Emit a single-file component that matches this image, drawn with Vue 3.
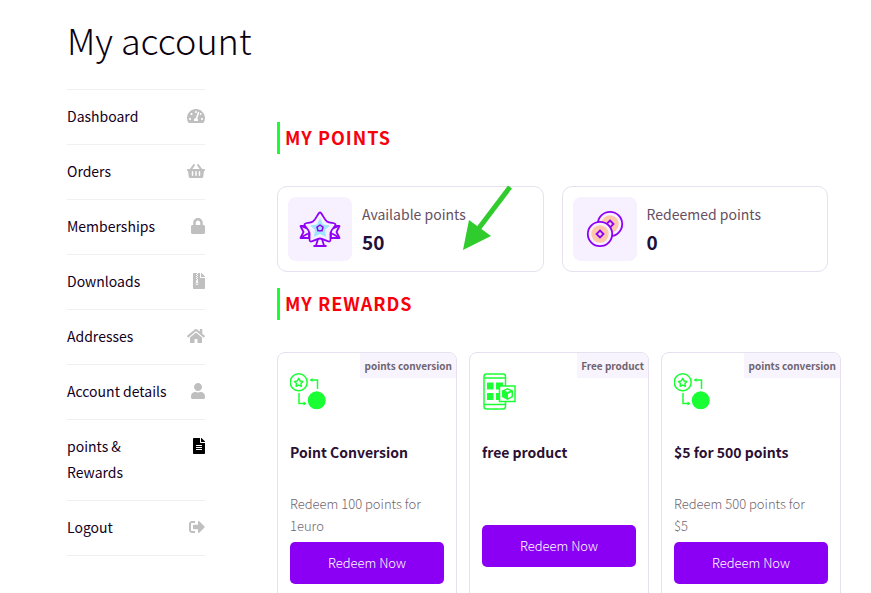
<script setup>
const navItems = [
  {
    label: 'Dashboard',
    box: '0 0 576 512',
    width: 18,
    path: 'M288 32C128.94 32 0 160.94 0 320c0 52.8 14.25 102.26 39.06 144.8 5.61 9.62 16.3 15.2 27.44 15.2h443c11.14 0 21.83-5.58 27.44-15.2C561.75 422.26 576 372.8 576 320c0-159.06-128.94-288-288-288zm0 64c14.71 0 26.58 10.13 30.32 23.65-1.11 2.26-2.64 4.23-3.45 6.67l-9.22 27.67c-5.13 3.49-10.97 6.01-17.64 6.01-17.67 0-32-14.33-32-32S270.33 96 288 96zM96 384c-17.67 0-32-14.33-32-32s14.33-32 32-32 32 14.33 32 32-14.33 32-32 32zm48-160c-17.67 0-32-14.33-32-32s14.33-32 32-32 32 14.33 32 32-14.33 32-32 32zm246.77-72.41l-61.33 184C343.13 347.33 352 364.54 352 384c0 11.72-3.38 22.55-8.88 32H232.88c-5.5-9.45-8.88-20.28-8.88-32 0-33.94 26.5-61.43 59.9-63.59l61.34-184.01c4.17-12.56 17.73-19.45 30.36-15.17 12.57 4.19 19.35 17.79 15.17 30.36zm14.66 57.2l15.52-46.55c3.47-1.29 7.13-2.23 11.05-2.23 17.67 0 32 14.33 32 32s-14.33 32-32 32c-11.38-.01-20.89-6.28-26.57-15.22zM480 384c-17.67 0-32-14.33-32-32s14.33-32 32-32 32 14.33 32 32-14.33 32-32 32z',
  },
  {
    label: 'Orders',
    box: '0 0 576 512',
    width: 18,
    path: 'M576 216v16c0 13.255-10.745 24-24 24h-8l-26.113 182.788C514.509 462.435 494.257 480 470.37 480H105.63c-23.887 0-44.139-17.565-47.518-41.212L32 256h-8c-13.255 0-24-10.745-24-24v-16c0-13.255 10.745-24 24-24h67.341l106.78-146.821c10.395-14.292 30.407-17.453 44.701-7.058 14.293 10.395 17.453 30.408 7.058 44.701L170.477 192h235.046L326.12 82.821c-10.395-14.292-7.234-34.306 7.059-44.701 14.291-10.395 34.306-7.235 44.701 7.058L484.659 192H552c13.255 0 24 10.745 24 24zM312 392V280c0-13.255-10.745-24-24-24s-24 10.745-24 24v112c0 13.255 10.745 24 24 24s24-10.745 24-24zm112 0V280c0-13.255-10.745-24-24-24s-24 10.745-24 24v112c0 13.255 10.745 24 24 24s24-10.745 24-24zm-224 0V280c0-13.255-10.745-24-24-24s-24 10.745-24 24v112c0 13.255 10.745 24 24 24s24-10.745 24-24z',
  },
  {
    label: 'Memberships',
    box: '0 0 448 512',
    width: 14,
    path: 'M400 224h-24v-72C376 68.2 307.8 0 224 0S72 68.2 72 152v72H48c-26.5 0-48 21.5-48 48v192c0 26.5 21.5 48 48 48h352c26.5 0 48-21.5 48-48V272c0-26.5-21.5-48-48-48zm-104 0H152v-72c0-39.7 32.3-72 72-72s72 32.3 72 72v72z',
  },
  {
    label: 'Downloads',
    box: '0 0 384 512',
    width: 12,
    path: 'M224 136V0H160v32h-32V0H24C10.7 0 0 10.7 0 24v464c0 13.3 10.7 24 24 24h336c13.3 0 24-10.7 24-24V160H248c-13.2 0-24-10.8-24-24zM96 32h32v32H96zM128 64h32v32h-32zM96 96h32v32H96zM128 128h32v32h-32zM96 160h32v32H96zM128 192h32v32h-32zM107 224h42l20 97c7 35-10 63-41 63s-48-28-41-63zM128 304c-18 0-30 10-30 25s12 25 30 25 30-10 30-25-12-25-30-25zM384 121.9v6.1H256V0h6.1c6.4 0 12.5 2.5 17 7l97.9 98c4.5 4.5 7 10.6 7 16.9z',
  },
  {
    label: 'Addresses',
    box: '0 0 576 512',
    width: 18,
    path: 'M280.37 148.26L96 300.11V464a16 16 0 0 0 16 16l112.06-.29a16 16 0 0 0 15.92-16V368a16 16 0 0 1 16-16h64a16 16 0 0 1 16 16v95.64a16 16 0 0 0 16 16.05L464 480a16 16 0 0 0 16-16V300L295.67 148.26a12.19 12.19 0 0 0-15.3 0zM571.6 251.47L488 182.56V44.05a12 12 0 0 0-12-12h-56a12 12 0 0 0-12 12v72.61L318.47 43a48 48 0 0 0-61 0L4.34 251.47a12 12 0 0 0-1.6 16.9l25.5 31A12 12 0 0 0 45.15 301l235.22-193.74a12.19 12.19 0 0 1 15.3 0L530.9 301a12 12 0 0 0 16.9-1.6l25.5-31a12 12 0 0 0-1.7-16.93z',
  },
  {
    label: 'Account details',
    box: '0 0 448 512',
    width: 14,
    path: 'M224 256c70.7 0 128-57.3 128-128S294.7 0 224 0 96 57.3 96 128s57.3 128 128 128zm89.6 32h-16.7c-22.2 10.2-46.9 16-72.9 16s-50.6-5.8-72.9-16h-16.7C60.2 288 0 348.2 0 422.4V464c0 26.5 21.5 48 48 48h352c26.5 0 48-21.5 48-48v-41.6c0-74.2-60.2-134.4-134.4-134.4z',
  },
  {
    label: 'points & Rewards',
    box: '0 0 384 512',
    width: 12,
    active: true,
    path: 'M224 136V0H24C10.7 0 0 10.7 0 24v464c0 13.3 10.7 24 24 24h336c13.3 0 24-10.7 24-24V160H248c-13.2 0-24-10.8-24-24zm64 236c0 6.6-5.4 12-12 12H108c-6.6 0-12-5.4-12-12v-8c0-6.6 5.4-12 12-12h168c6.6 0 12 5.4 12 12v8zm0-64c0 6.6-5.4 12-12 12H108c-6.6 0-12-5.4-12-12v-8c0-6.6 5.4-12 12-12h168c6.6 0 12 5.4 12 12v8zm0-72v8c0 6.6-5.4 12-12 12H108c-6.6 0-12-5.4-12-12v-8c0-6.6 5.4-12 12-12h168c6.6 0 12 5.4 12 12zm96-114.1v6.1H256V0h6.1c6.4 0 12.5 2.5 17 7l97.9 98c4.5 4.5 7 10.6 7 16.9z',
  },
  {
    label: 'Logout',
    box: '0 0 512 512',
    width: 16,
    path: 'M497 273L329 441c-15 15-41 4.5-41-17v-96H152c-13.3 0-24-10.7-24-24v-96c0-13.3 10.7-24 24-24h136V88c0-21.4 25.9-32 41-17l168 168c9.3 9.4 9.3 24.6 0 34zM192 436v-40c0-6.6-5.4-12-12-12H96c-17.7 0-32-14.3-32-32V160c0-17.7 14.3-32 32-32h84c6.6 0 12-5.4 12-12V76c0-6.6-5.4-12-12-12H96c-53 0-96 43-96 96v192c0 53 43 96 96 96h84c6.6 0 12-5.4 12-12z',
  },
]

const rewards = [
  { badge: 'points conversion', kind: 'conversion', title: 'Point Conversion', text: 'Redeem 100 points for 1euro' },
  { badge: 'Free product', kind: 'product', title: 'free product', text: '' },
  { badge: 'points conversion', kind: 'conversion', title: '$5 for 500 points', text: 'Redeem 500 points for $5' },
]
</script>

<template>
  <div class="page">
    <h1>My account</h1>
    <div class="layout">
      <nav class="menu">
        <ul>
          <li v-for="item in navItems" :key="item.label">
            <a href="#" :class="{ active: item.active }">
              <span>{{ item.label }}</span>
              <svg :viewBox="item.box" :width="item.width" height="16" aria-hidden="true">
                <path :d="item.path" fill-rule="evenodd" />
              </svg>
            </a>
          </li>
        </ul>
      </nav>

      <main>
        <h2>MY POINTS</h2>
        <div class="stats">
          <section class="stat">
            <div class="tile">
              <svg viewBox="0 0 64 64" width="64" height="64" fill="none" stroke="#8f00f5" stroke-width="1.8" stroke-linejoin="round" aria-hidden="true">
                <path d="M12.500 29H21V41H12.500L15.500 35ZM51.500 29H43V41H51.500L48.500 35Z" />
                <path d="M13 29L19 31.500M51 29L45 31.500M13 40.500L20 36.500M51 40.500L44 36.500" />
                <path d="M30 42L28 48.500M34 42L36 48.500M25.500 49H38.500" />
                <path d="M32 15.500C34 15.500 36 22.500 39 24.500S47.500 25.500 47.500 27.500 43 32.500 42.500 36 43.500 44 41.500 44.500 35 41.500 32 41.500 24.500 45 22.500 44.500 22 39.500 21.500 36 16.500 29.500 16.500 27.500 22 26.500 25 24.500 30 15.500 32 15.500Z" fill="#f7f1ff" />
                <path d="M32 21L35 27.500L42 28.500L37 33L38.200 40L32 37L25.800 40L27 33L22 28.500L29 27.500Z" fill="#a0e6ff" stroke="none" />
                <path d="M32 28L35 30.200L34 33.800H30L29 30.200Z" stroke-width="1.500" />
              </svg>
            </div>
            <div class="figures">
              <span class="label">Available points</span>
              <strong>50</strong>
            </div>
            <svg class="pointer" viewBox="0 0 54 68" width="54" height="68" aria-hidden="true">
              <path d="M50 4L19 45" stroke="#30cb2c" stroke-width="5" fill="none" />
              <path d="M3 67L9 37L31 53Z" fill="#30cb2c" />
            </svg>
          </section>
          <section class="stat">
            <div class="tile">
              <svg viewBox="0 0 64 64" width="64" height="64" stroke="#8f00f5" stroke-width="1.8" aria-hidden="true">
                <circle cx="37" cy="27" r="12.200" fill="#f7f1ff" />
                <circle cx="37" cy="27" r="8.700" fill="#ffc8aa" stroke="none" />
                <path d="M37 23.500L40.500 27L37 30.500L33.500 27Z" fill="#f7d8d8" />
                <circle cx="27" cy="37" r="12.200" fill="#f7f1ff" />
                <circle cx="27" cy="37" r="8.700" fill="#ffc8aa" stroke="none" />
                <path d="M27 33.500L30.500 37L27 40.500L23.500 37Z" fill="#f7d8d8" />
              </svg>
            </div>
            <div class="figures">
              <span class="label">Redeemed points</span>
              <strong>0</strong>
            </div>
          </section>
        </div>

        <h2>MY REWARDS</h2>
        <div class="rewards">
          <article v-for="reward in rewards" :key="reward.title" class="reward">
            <span class="badge">{{ reward.badge }}</span>
            <svg v-if="reward.kind === 'conversion'" viewBox="0 0 38 38" width="38" height="38" fill="none" stroke="#1aff33" stroke-width="1.500" aria-hidden="true">
              <circle cx="8.700" cy="10.300" r="8.500" />
              <path d="M8.700 6.300L10.100 8.900L12.900 9.400L10.900 11.500L11.300 14.300L8.700 13.100L6.100 14.300L6.500 11.500L4.500 9.400L7.300 8.900Z" stroke-linejoin="round" />
              <path d="M27.500 17V8H21M9 21V31.500H15" />
              <path d="M19.500 8L22.500 6V10ZM16.500 31.500L13.500 29.500V33.500Z" fill="#1aff33" stroke="none" />
              <circle cx="26.700" cy="28.300" r="9" fill="#1aff33" stroke="none" />
            </svg>
            <svg v-else viewBox="0 0 38 38" width="38" height="38" fill="none" stroke="#1aff33" stroke-width="1.500" aria-hidden="true">
              <rect x="2" y="2" width="21.500" height="35" rx="2.500" />
              <path d="M2 6H23.500M2 32.500H23.500" />
              <path d="M5 10.500H11.500V17.500H5ZM14 10.500H21V17.500H14ZM5 21H11.500V28H5ZM14 21H18V28H14Z" fill="#1aff33" stroke="none" />
              <rect x="17.500" y="14" width="15.500" height="15.500" fill="#fff" />
              <path d="M25.500 16L31 18.500V25L25.500 28L20 25V18.500Z" fill="#1aff33" stroke="none" />
              <path d="M26 22L29.500 20.200V24.200L26 26ZM23 18.700L25.500 17.600L28 18.700L25.500 20Z" fill="#fff" stroke="none" />
            </svg>
            <h3>{{ reward.title }}</h3>
            <p>{{ reward.text }}</p>
            <button type="button">Redeem Now</button>
          </article>
        </div>
      </main>
    </div>
  </div>
</template>

<style>
body {
  margin: 0;
  background: #fff;
}
</style>

<style scoped>
.page {
  padding: 12px 30px 24px 67px;
  font-family: "Noto Sans CJK SC", "Noto Sans", sans-serif;
  font-size: 14px;
  line-height: 26px;
  color: #2b1033;
}

h1 {
  margin: 0 0 23px;
  font-size: 36px;
  font-weight: 300;
  line-height: 54px;
  color: #0a000e;
}

.layout {
  display: grid;
  grid-template-columns: 138fr 564fr;
  gap: 72px;
  align-items: start;
}

.menu ul {
  margin: 0;
  padding: 0;
  list-style: none;
  border-top: 1px solid #f0f0f0;
}

.menu li {
  border-bottom: 1px solid #f0f0f0;
}

.menu a {
  display: flex;
  justify-content: space-between;
  gap: 24px;
  padding: 13px 0 15px;
  color: #14001c;
  text-decoration: none;
}

.menu svg {
  flex: none;
  margin-top: 5px;
  fill: #bfbfbf;
}

.menu a.active svg {
  fill: #000;
}

main {
  padding-top: 33px;
}

h2 {
  margin: 0 0 32px;
  padding: 0 0 2px 5px;
  border-left: 3px solid #1aff33;
  font-size: 18px;
  font-weight: 700;
  line-height: 30px;
  letter-spacing: 1px;
  color: #f8000c;
}

.stats {
  display: grid;
  grid-template-columns: 1fr 1fr;
  gap: 18px;
  margin: 0 13px 16px 0;
}

.stat {
  position: relative;
  display: flex;
  align-items: center;
  gap: 10px;
  padding: 10px;
  border: 1px solid #e6e0ef;
  border-radius: 10px;
}

.tile {
  flex: none;
  height: 64px;
  border-radius: 8px;
  background: #f7f1ff;
}

.figures {
  display: flex;
  flex-direction: column;
  padding-bottom: 2px;
}

.label {
  line-height: 28px;
  color: #655063;
}

.figures strong {
  font-size: 19px;
  line-height: 28px;
  color: #20103a;
}

.pointer {
  position: absolute;
  top: -4px;
  right: 29px;
}

.rewards {
  display: grid;
  grid-template-columns: repeat(3, 1fr);
  gap: 12px;
}

.reward {
  position: relative;
  display: flex;
  flex-direction: column;
  align-items: flex-start;
  padding: 19px 12px 24px;
  border: 1px solid #e6e0ef;
  border-radius: 8px;
}

.badge {
  position: absolute;
  top: 0;
  right: 0;
  padding: 0 4px;
  border-top-right-radius: 8px;
  background: #f8f4fd;
  font-size: 10px;
  font-weight: 700;
  line-height: 25px;
  color: #6f6370;
}

h3 {
  margin: 29px 0 28px;
  font-size: 14px;
  font-weight: 700;
  line-height: 26px;
  color: #2b1033;
}

.reward p {
  min-height: 27px;
  margin: 0 0 5px;
  padding-right: 12px;
  font-size: 13px;
  font-weight: 300;
  line-height: 22px;
  color: #6f666f;
}

button {
  align-self: stretch;
  height: 42px;
  padding: 0 0 2px;
  border: 0;
  border-radius: 5px;
  background: #8b00f5;
  font-family: inherit;
  font-size: 13px;
  font-weight: 300;
  color: #fff;
}
</style>
